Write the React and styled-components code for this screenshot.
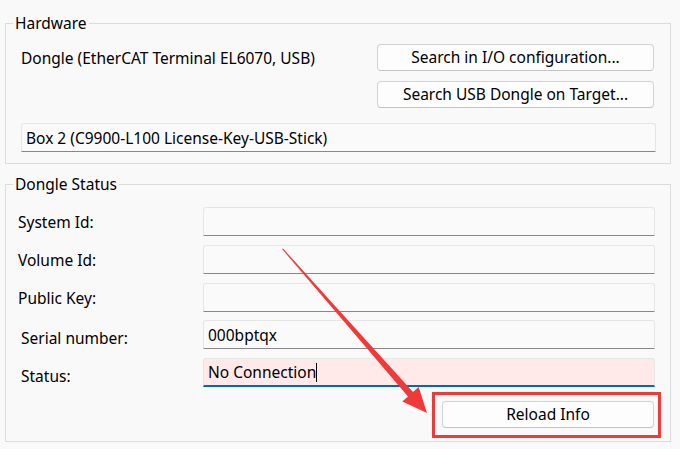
import React from "react";
import styled, { createGlobalStyle } from "styled-components";

const GlobalStyle = createGlobalStyle`
  html, body {
    margin: 0;
    padding: 0;
    background: #f9f9f9;
  }
  body {
    font-family: "Noto Sans", "Open Sans", sans-serif;
    font-size: 15.5px;
    color: #000;
  }
`;

const Page = styled.div`
  position: relative;
  width: 680px;
  height: 449px;
  padding: 13px 0 0 5px;
  box-sizing: border-box;
  overflow: hidden;
`;

const Group = styled.fieldset`
  width: 666px;
  box-sizing: border-box;
  margin: 0 0 10px 0;
  border: 1px solid #dcdcdc;
  padding: ${(p) => p.$pad};
  min-inline-size: 0;
`;

// legend text sits 10px right of the group's left border
const Legend = styled.legend`
  margin-left: ${(p) => p.$shift}px;
  padding: 0 2px;
  line-height: 20px;
`;

const TopRow = styled.div`
  display: flex;
  justify-content: space-between;
  align-items: flex-start;
  padding-right: 2px;
`;

// $drop nudges the text down without growing the row
const Label = styled.div`
  line-height: 27px;
  padding-left: ${(p) => p.$indent || 0}px;
  padding-top: ${(p) => p.$drop || 0}px;
  margin-bottom: ${(p) => -(p.$drop || 0)}px;
  white-space: nowrap;
`;

const ButtonStack = styled.div`
  display: flex;
  flex-direction: column;
  gap: 10px;
`;

const Button = styled.button`
  width: ${(p) => p.$width}px;
  height: 27px;
  box-sizing: border-box;
  background: #fdfdfd;
  border: 1px solid #d3d3d3;
  border-bottom-color: #c4c4c4;
  border-radius: 4px;
  font-family: inherit;
  font-size: 15.5px;
  color: #000;
  padding: 0;
  line-height: 25px;
  cursor: pointer;
`;

const Field = styled.div`
  height: 29px;
  box-sizing: border-box;
  background: ${(p) => (p.$error ? "#ffe9e9" : "#fafafa")};
  border: 1px solid #e6e6e6;
  border-bottom: ${(p) => (p.$focused ? "2px solid #0067c0" : "1px solid #878787")};
  border-radius: 3px 3px 0 0;
  padding: 0 4px;
  white-space: nowrap;
  display: flex;
  align-items: center;
`;

const WideField = styled(Field)`
  margin-top: 15px;
`;

const Caret = styled.span`
  display: inline-block;
  width: 1px;
  height: 19px;
  background: #000;
`;

const StatusGrid = styled.div`
  display: grid;
  grid-template-columns: 185px 452px;
  row-gap: 8.75px;
  align-items: start;
`;

const Footer = styled.div`
  display: flex;
  justify-content: flex-end;
  margin-top: 14px;
  padding-right: 1px;
`;

const Overlay = styled.svg`
  position: absolute;
  left: 0;
  top: 0;
  width: 680px;
  height: 449px;
  pointer-events: none;
`;

const rows = [
  { label: "System Id:", indent: 0, drop: 2, value: "" },
  { label: "Volume Id:", indent: 0, drop: 2, value: "" },
  { label: "Public Key:", indent: 0, drop: 2, value: "" },
  { label: "Serial number:", indent: 3, drop: 5, value: "000bptqx" },
];

export default function App() {
  return (
    <>
      <GlobalStyle />
      <Page>
        <Group $pad="11px 14px 11px 15px">
          <Legend $shift={-8}>Hardware</Legend>
          <TopRow>
            <Label $drop={1}>Dongle (EtherCAT Terminal EL6070, USB)</Label>
            <ButtonStack>
              <Button $width={277}>Search in I/O configuration...</Button>
              <Button $width={277}>Search USB Dongle on Target...</Button>
            </ButtonStack>
          </TopRow>
          <WideField>Box 2 (C9900-L100 License-Key-USB-Stick)</WideField>
        </Group>

        <Group $pad="13px 15px 13px 12px">
          <Legend $shift={-5}>Dongle Status</Legend>
          <StatusGrid>
            {rows.map((r) => (
              <React.Fragment key={r.label}>
                <Label $indent={r.indent} $drop={r.drop}>{r.label}</Label>
                <Field>{r.value}</Field>
              </React.Fragment>
            ))}
            <Label $indent={3} $drop={5}>Status:</Label>
            <Field $error $focused>
              No Connection
              <Caret />
            </Field>
          </StatusGrid>
          <Footer>
            <Button $width={212}>Reload Info</Button>
          </Footer>
        </Group>

        <Overlay viewBox="0 0 680 449">
          <rect x="433.5" y="393.5" width="226" height="43" fill="none" stroke="#f03a3a" strokeWidth="3" />
          <polygon
            fill="#f03a3a"
            points="282,249 283,248.5 413,392 418.7,387 427,413 402.3,401.6 408,396.5"
          />
        </Overlay>
      </Page>
    </>
  );
}
